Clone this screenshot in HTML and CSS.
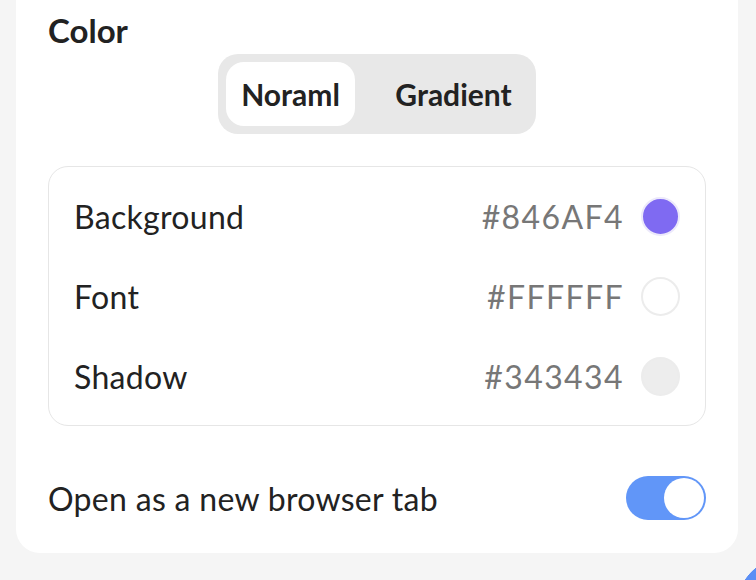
FILE: index.html
```html
<!DOCTYPE html>
<html lang="en">
<head>
<meta charset="utf-8">
<title>Color settings</title>
<link rel="stylesheet" href="styles.css">
</head>
<body>
<div class="card">
  <h2 class="title">Color</h2>
  <div class="segment">
    <button class="seg-btn active">Noraml</button>
    <button class="seg-btn">Gradient</button>
  </div>
  <div class="colors">
    <div class="row">
      <span class="label">Background</span>
      <span class="value">#846AF4</span>
      <span class="swatch swatch-purple"></span>
    </div>
    <div class="row">
      <span class="label">Font</span>
      <span class="value">#FFFFFF</span>
      <span class="swatch swatch-white"></span>
    </div>
    <div class="row">
      <span class="label">Shadow</span>
      <span class="value">#343434</span>
      <span class="swatch swatch-gray"></span>
    </div>
  </div>
  <div class="option">
    <span class="label">Open as a new browser tab</span>
    <span class="toggle"><span class="knob"></span></span>
  </div>
</div>
<span class="corner"></span>
</body>
</html>
```

FILE: styles.css
```css
* { box-sizing: border-box; }
html, body { margin: 0; padding: 0; }
body {
  background: #f5f5f5;
  font-family: Lato, "Noto Sans", sans-serif;
  color: #222;
  width: 756px;
  height: 580px;
  overflow: hidden;
  position: relative;
}
.card {
  margin: -40px 18px 0 16px;
  background: #fff;
  border-radius: 0 0 24px 24px;
  padding: 52px 32px 33px 32px;
  display: flex;
  flex-direction: column;
}
.title {
  margin: 0;
  font-size: 33px;
  font-weight: 700;
  line-height: 36px;
  color: #222;
}
.segment {
  align-self: center;
  display: flex;
  background: #e8e8e8;
  border-radius: 20px;
  padding: 8px;
  margin-top: 6px;
  width: 318px;
  height: 80px;
}
.seg-btn {
  font-family: inherit;
  border: 0;
  background: transparent;
  font-size: 30px;
  font-weight: 700;
  color: #222;
  border-radius: 18px;
  height: 64px;
  padding: 0;
  width: 129px;
}
.seg-btn + .seg-btn { flex: 1; padding-left: 24px; }
.seg-btn.active { background: #fff; }
.colors {
  margin-top: 32px;
  border: 1px solid #e6e6e6;
  border-radius: 20px;
  padding: 9px 25px 9px 25px;
}
.row {
  display: flex;
  align-items: center;
  height: 80px;
}
.label {
  font-size: 32px;
  letter-spacing: 0.3px;
  color: #222;
  flex: 1;
}
.value {
  font-size: 32px;
  letter-spacing: 1.4px;
  color: #777;
  margin-right: 17px;
}
.swatch {
  width: 39px;
  height: 39px;
  border-radius: 50%;
  border: 2px solid #ececec;
}
.swatch-purple { background: #7f6af2; border-color: #ece9fb; }
.swatch-white { background: #fff; }
.swatch-gray { background: #ededed; }
.option {
  display: flex;
  align-items: center;
  margin-top: 50px;
  height: 44px;
}
.toggle {
  width: 80px;
  height: 44px;
  border-radius: 22px;
  background: #6196f8;
  display: flex;
  justify-content: flex-end;
  align-items: center;
  padding: 2px;
}
.knob {
  width: 40px;
  height: 40px;
  border-radius: 50%;
  background: #fff;
}
.corner {
  position: absolute;
  right: 0;
  bottom: 0;
  width: 20px;
  height: 20px;
  background: radial-gradient(circle at 54px 50px, #5b8ff5 54px, rgba(91, 143, 245, 0) 54.6px);
}
```
